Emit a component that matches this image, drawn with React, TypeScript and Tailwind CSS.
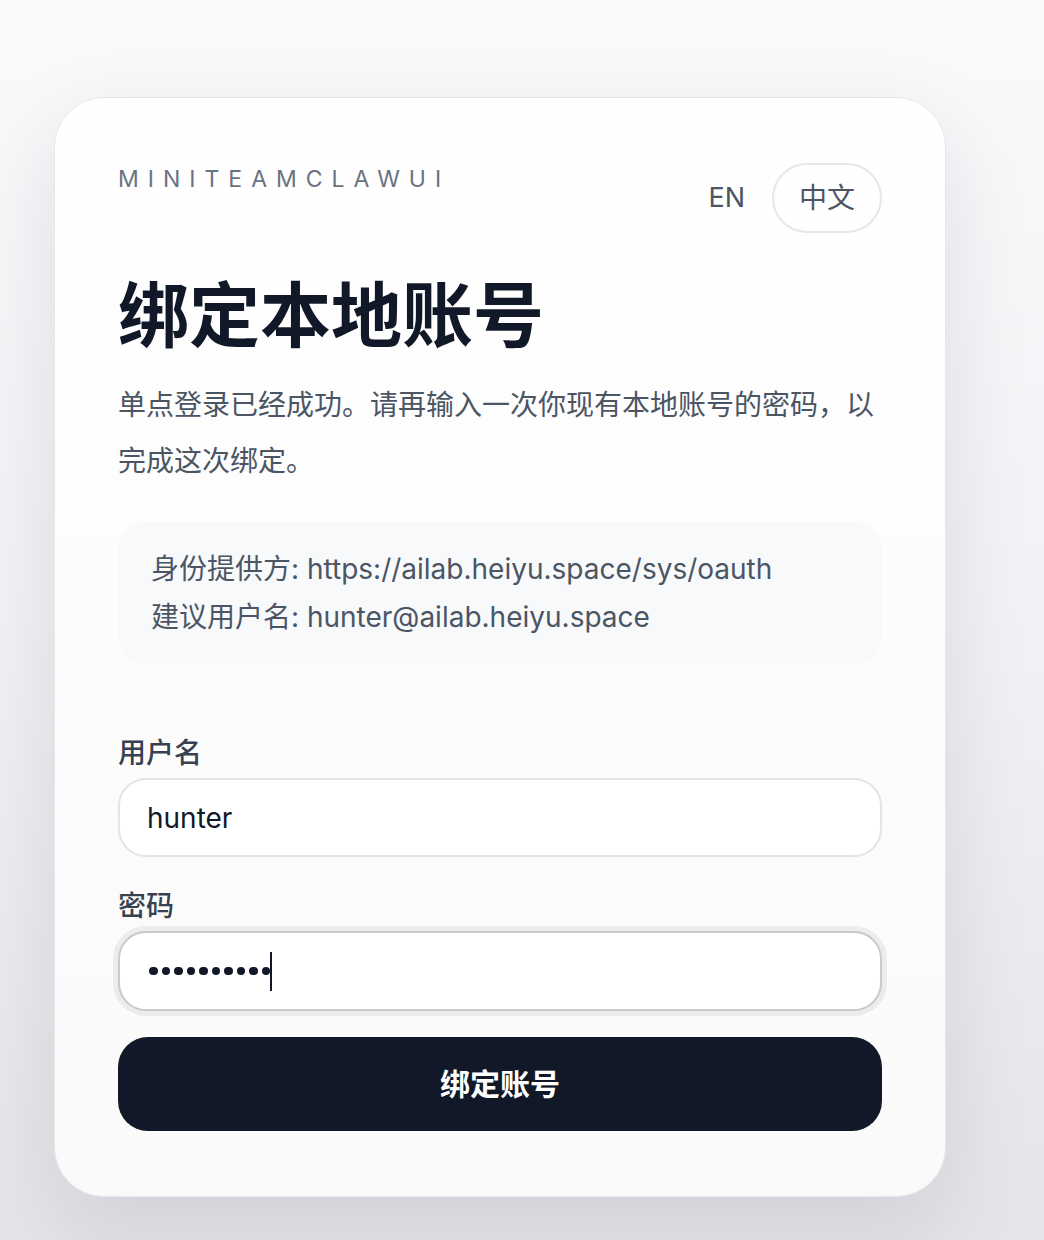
import { useState } from 'react';

const sans = 'font-["Inter","Noto_Sans_CJK_SC",sans-serif]';

function LangSwitch() {
  const [lang, setLang] = useState<'en' | 'zh'>('zh');
  return (
    <div className="flex items-center">
      <button
        onClick={() => setLang('en')}
        className={`h-[70px] px-[25px] rounded-full text-[27px] text-[#4b5563] border-2 ${lang === 'en' ? 'border-[#e5e7eb]' : 'border-transparent'}`}
      >
        EN
      </button>
      <button
        onClick={() => setLang('zh')}
        className={`h-[70px] w-[110px] rounded-full text-[28px] text-[#4b5563] border-2 ${lang === 'zh' ? 'border-[#e5e7eb]' : 'border-transparent'}`}
      >
        中文
      </button>
    </div>
  );
}

function Field({ label, children }: { label: string; children: React.ReactNode }) {
  return (
    <div className="flex flex-col gap-[5px]">
      <label className="text-[28px] leading-[40px] font-medium text-[#374151]">{label}</label>
      {children}
    </div>
  );
}

export default function App() {
  const [username] = useState('hunter');
  const passwordLength = 10;

  return (
    <div className={`min-h-[1240px] w-full bg-gradient-to-b from-[#f9fafb] via-[#f1f2f5] to-[#e3e5e9] ${sans}`}>
      <div className="pt-[97px] pl-[54px]">
        <div className="w-[892px] rounded-[50px] border border-[#e6e7ea] bg-gradient-to-b from-white to-[#fafafa] shadow-[0_30px_90px_rgba(15,23,42,0.10)] px-[63px] pt-[65px] pb-[65px]">
          <div className="flex items-start justify-between">
            <div className="mt-[2px] text-[23px] leading-[28px] tracking-[9px] text-[#6b7280]">MINITEAMCLAWUI</div>
            <LangSwitch />
          </div>

          <h1 className="mt-[40px] text-[71px] leading-[84px] font-bold text-[#111827]">绑定本地账号</h1>

          <p className="mt-[20px] text-[28px] leading-[56px] text-[#4b5563]">
            单点登录已经成功。请再输入一次你现有本地账号的密码，以完成这次绑定。
          </p>

          <div className="mt-[33px] rounded-[30px] bg-[#f8f9fb] px-[33px] py-[24px] text-[28px] leading-[47.5px] text-[#4b5563]">
            <div>身份提供方: https://ailab.heiyu.space/sys/oauth</div>
            <div>建议用户名: hunter@ailab.heiyu.space</div>
          </div>

          <div className="mt-[68px] flex flex-col gap-[29px]">
            <Field label="用户名">
              <div className="h-[79px] rounded-[28px] border-2 border-[#e3e4e7] bg-white px-[27px] flex items-center text-[28px] text-[#111827]">
                {username}
              </div>
            </Field>
            <Field label="密码">
              <div className="h-[80px] rounded-[28px] border-2 border-[#c9cacd] bg-white pl-[29px] pr-[27px] flex items-center ring-[5px] ring-[#ececed]">
                <div className="flex items-center gap-[4px]">
                  {Array.from({ length: passwordLength }).map((_, i) => (
                    <span key={i} className="block w-[8.5px] h-[8.5px] rounded-full bg-[#111827]" />
                  ))}
                </div>
                <span className="block w-[2px] h-[39px] bg-[#111827]" />
              </div>
            </Field>
          </div>

          <button className="mt-[26px] w-full h-[94px] rounded-[30px] bg-[#111827] text-white text-[30px] font-semibold">
            绑定账号
          </button>
        </div>
      </div>
    </div>
  );
}
